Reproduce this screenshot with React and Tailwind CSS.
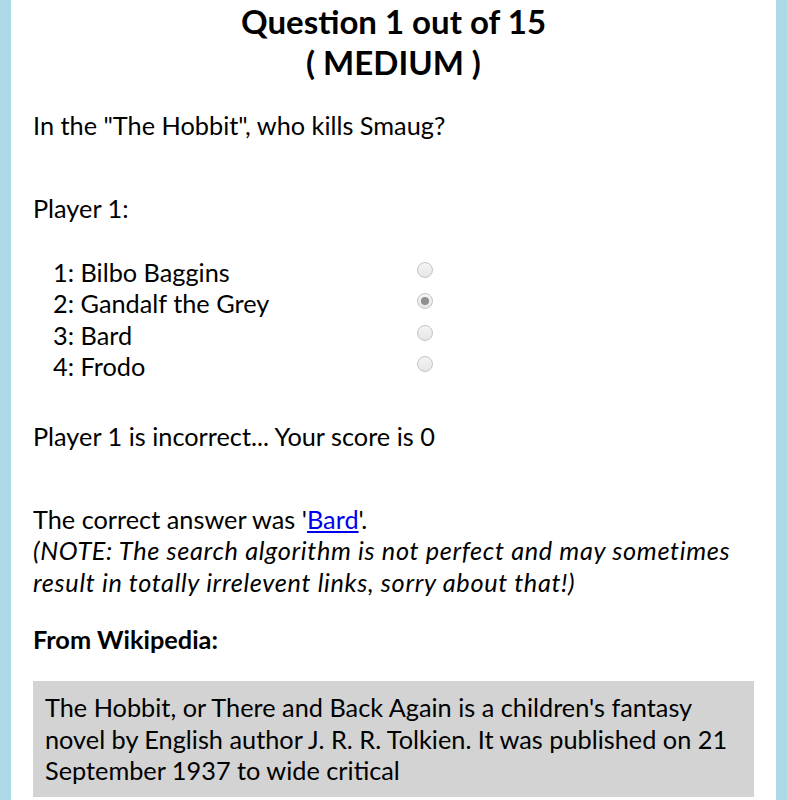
import { useState } from "react";

const OPTIONS = ["Bilbo Baggins", "Gandalf the Grey", "Bard", "Frodo"];

function Radio({ checked }) {
  return (
    <span className="w-[16px] h-[16px] rounded-full border border-[#c4c4c4] bg-gradient-to-b from-[#f4f4f4] to-[#e6e6e6] flex items-center justify-center">
      {checked && <span className="w-[8px] h-[8px] rounded-full bg-[#8f8f8f]" />}
    </span>
  );
}

export default function App() {
  const [picked] = useState(1);

  return (
    <div className="min-h-[800px] bg-[#add8e6] px-[11px] font-['Lato','Liberation_Sans',sans-serif] text-black">
      <div className="bg-white min-h-[800px] px-[22px] pt-[1px]">
        <h1 className="text-center text-[33px] font-bold leading-[41px]">
          Question 1 out of 15
          <br />( MEDIUM )
        </h1>

        <p className="mt-[27px] text-[25.3px] leading-[31.4px]">In the "The Hobbit", who kills Smaug?</p>

        <p className="mt-[52px] text-[25.3px] leading-[31.4px]">Player 1:</p>

        <div className="mt-[32px] pl-[20px] text-[25.3px] leading-[31.4px]">
          {OPTIONS.map((o, i) => (
            <div key={i} className="grid grid-cols-[362px_20px] items-center">
              <span>{i + 1}: {o}</span>
              <span className="flex justify-center -mt-[5px]">
                <Radio checked={i === picked} />
              </span>
            </div>
          ))}
        </div>

        <p className="mt-[39px] text-[25.3px] leading-[31.4px]">Player 1 is incorrect... Your score is 0</p>

        <div className="mt-[51px] text-[25.3px] leading-[31.4px]">
          <p>
            The correct answer was '<a href="#" className="text-[#0000ee] underline">Bard</a>'.
          </p>
          <p className="italic tracking-[0.65px]">
            (NOTE: The search algorithm is not perfect and may sometimes result in totally irrelevent links, sorry about that!)
          </p>
        </div>

        <p className="mt-[26px] text-[25.3px] leading-[31.4px] font-bold">From Wikipedia:</p>

        <div className="mt-[26px] bg-[#d3d3d3] px-[12px] pt-[11px] pb-[10px] text-[25.3px] leading-[31.4px]">
          The Hobbit, or There and Back Again is a children's fantasy novel by English author J. R. R. Tolkien. It was published on 21 September 1937 to wide critical
        </div>
      </div>
    </div>
  );
}
